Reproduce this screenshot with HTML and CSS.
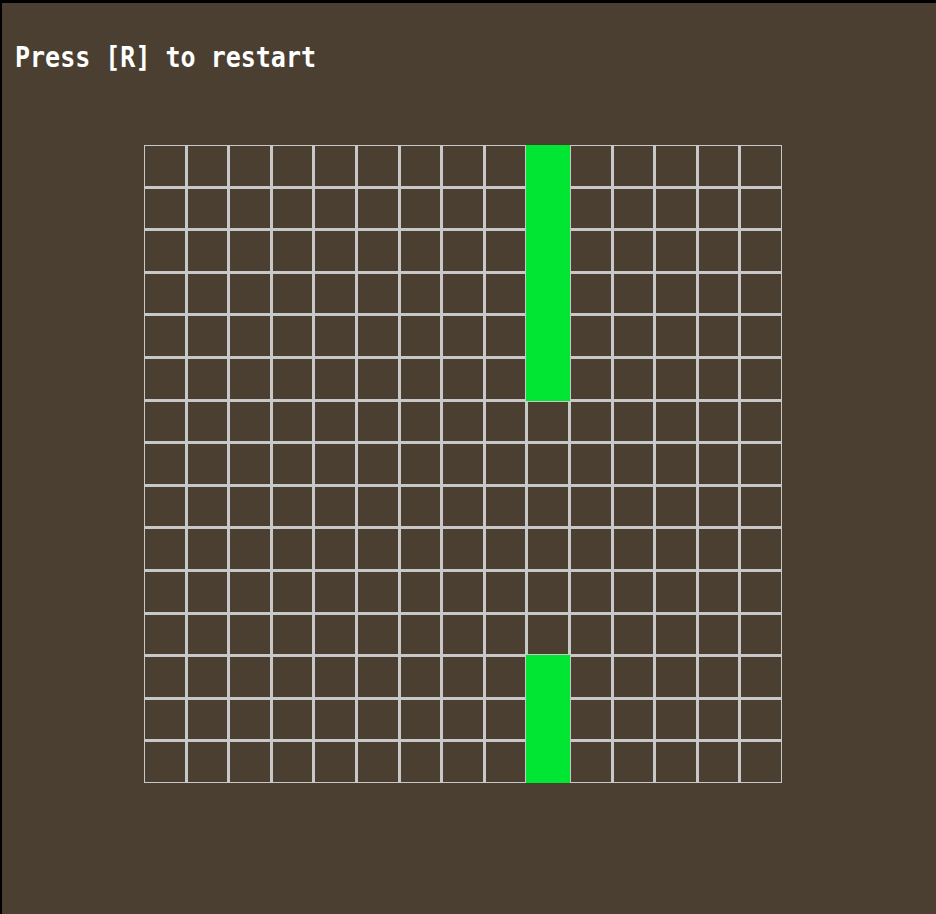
FILE: index.html
```html
<!DOCTYPE html>
<html>
<head>
<meta charset="utf-8">
<link rel="stylesheet" href="styles.css">
</head>
<body>
<div class="screen">
  <div class="msg">Press [R] to restart</div>
  <div class="board">
    <div class="c"></div><div class="c"></div><div class="c"></div><div class="c"></div><div class="c"></div><div class="c"></div><div class="c"></div><div class="c"></div><div class="c"></div><div class="c g"></div><div class="c"></div><div class="c"></div><div class="c"></div><div class="c"></div><div class="c"></div>
    <div class="c"></div><div class="c"></div><div class="c"></div><div class="c"></div><div class="c"></div><div class="c"></div><div class="c"></div><div class="c"></div><div class="c"></div><div class="c g"></div><div class="c"></div><div class="c"></div><div class="c"></div><div class="c"></div><div class="c"></div>
    <div class="c"></div><div class="c"></div><div class="c"></div><div class="c"></div><div class="c"></div><div class="c"></div><div class="c"></div><div class="c"></div><div class="c"></div><div class="c g"></div><div class="c"></div><div class="c"></div><div class="c"></div><div class="c"></div><div class="c"></div>
    <div class="c"></div><div class="c"></div><div class="c"></div><div class="c"></div><div class="c"></div><div class="c"></div><div class="c"></div><div class="c"></div><div class="c"></div><div class="c g"></div><div class="c"></div><div class="c"></div><div class="c"></div><div class="c"></div><div class="c"></div>
    <div class="c"></div><div class="c"></div><div class="c"></div><div class="c"></div><div class="c"></div><div class="c"></div><div class="c"></div><div class="c"></div><div class="c"></div><div class="c g"></div><div class="c"></div><div class="c"></div><div class="c"></div><div class="c"></div><div class="c"></div>
    <div class="c"></div><div class="c"></div><div class="c"></div><div class="c"></div><div class="c"></div><div class="c"></div><div class="c"></div><div class="c"></div><div class="c"></div><div class="c g"></div><div class="c"></div><div class="c"></div><div class="c"></div><div class="c"></div><div class="c"></div>
    <div class="c"></div><div class="c"></div><div class="c"></div><div class="c"></div><div class="c"></div><div class="c"></div><div class="c"></div><div class="c"></div><div class="c"></div><div class="c"></div><div class="c"></div><div class="c"></div><div class="c"></div><div class="c"></div><div class="c"></div>
    <div class="c"></div><div class="c"></div><div class="c"></div><div class="c"></div><div class="c"></div><div class="c"></div><div class="c"></div><div class="c"></div><div class="c"></div><div class="c"></div><div class="c"></div><div class="c"></div><div class="c"></div><div class="c"></div><div class="c"></div>
    <div class="c"></div><div class="c"></div><div class="c"></div><div class="c"></div><div class="c"></div><div class="c"></div><div class="c"></div><div class="c"></div><div class="c"></div><div class="c"></div><div class="c"></div><div class="c"></div><div class="c"></div><div class="c"></div><div class="c"></div>
    <div class="c"></div><div class="c"></div><div class="c"></div><div class="c"></div><div class="c"></div><div class="c"></div><div class="c"></div><div class="c"></div><div class="c"></div><div class="c"></div><div class="c"></div><div class="c"></div><div class="c"></div><div class="c"></div><div class="c"></div>
    <div class="c"></div><div class="c"></div><div class="c"></div><div class="c"></div><div class="c"></div><div class="c"></div><div class="c"></div><div class="c"></div><div class="c"></div><div class="c"></div><div class="c"></div><div class="c"></div><div class="c"></div><div class="c"></div><div class="c"></div>
    <div class="c"></div><div class="c"></div><div class="c"></div><div class="c"></div><div class="c"></div><div class="c"></div><div class="c"></div><div class="c"></div><div class="c"></div><div class="c"></div><div class="c"></div><div class="c"></div><div class="c"></div><div class="c"></div><div class="c"></div>
    <div class="c"></div><div class="c"></div><div class="c"></div><div class="c"></div><div class="c"></div><div class="c"></div><div class="c"></div><div class="c"></div><div class="c"></div><div class="c g"></div><div class="c"></div><div class="c"></div><div class="c"></div><div class="c"></div><div class="c"></div>
    <div class="c"></div><div class="c"></div><div class="c"></div><div class="c"></div><div class="c"></div><div class="c"></div><div class="c"></div><div class="c"></div><div class="c"></div><div class="c g"></div><div class="c"></div><div class="c"></div><div class="c"></div><div class="c"></div><div class="c"></div>
    <div class="c"></div><div class="c"></div><div class="c"></div><div class="c"></div><div class="c"></div><div class="c"></div><div class="c"></div><div class="c"></div><div class="c"></div><div class="c g"></div><div class="c"></div><div class="c"></div><div class="c"></div><div class="c"></div><div class="c"></div>
  </div>
</div>
</body>
</html>
```

FILE: styles.css
```css
html, body {
  margin: 0;
  padding: 0;
  background: #000;
}
body {
  padding: 3px 0 0 2px;
  width: 934px;
  height: 911px;
  overflow: hidden;
}
.screen {
  background: #4b3f32;
  width: 934px;
  height: 911px;
  padding-top: 41px;
  box-sizing: border-box;
}
.msg {
  font-family: "DejaVu Sans Mono", monospace;
  font-weight: bold;
  font-size: 25px;
  line-height: 30px;
  color: #ffffff;
  padding-left: 13px;
  transform: scaleY(1.12);
  transform-origin: 0 24px;
}
.board {
  display: grid;
  grid-template-columns: repeat(15, 1fr);
  grid-template-rows: repeat(15, 1fr);
  gap: 3px;
  padding: 1px;
  box-sizing: border-box;
  background: #c8c8c8;
  margin: 71px 0 0 142px;
  width: 638px;
  height: 638px;
  overflow: hidden;
}
.c {
  background: #4b3f32;
}
.c.g {
  background: #00e632;
  box-shadow: 0 0 0 2px #00e632;
}
```
